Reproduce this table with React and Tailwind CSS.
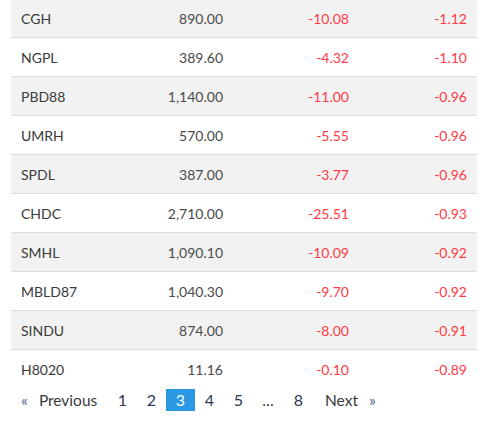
const rows = [
  ['CGH', '890.00', '-10.08', '-1.12'],
  ['NGPL', '389.60', '-4.32', '-1.10'],
  ['PBD88', '1,140.00', '-11.00', '-0.96'],
  ['UMRH', '570.00', '-5.55', '-0.96'],
  ['SPDL', '387.00', '-3.77', '-0.96'],
  ['CHDC', '2,710.00', '-25.51', '-0.93'],
  ['SMHL', '1,090.10', '-10.09', '-0.92'],
  ['MBLD87', '1,040.30', '-9.70', '-0.92'],
  ['SINDU', '874.00', '-8.00', '-0.91'],
  ['H8020', '11.16', '-0.10', '-0.89'],
]

const pages = ['1', '2', '3', '4', '5']

export default function App() {
  return (
    <div className="w-[487px] h-[440px] bg-white overflow-hidden font-['Lato',sans-serif] text-[#3a3a3a]">
      <div className="mx-[11px] w-[466px] -mt-px">
        {rows.map((r, i) => (
          <div
            key={r[0]}
            className={`flex items-center h-[39px] text-[14px] ${i % 2 === 0 ? 'bg-[#f2f2f2]' : 'bg-white'} ${i < rows.length - 1 ? 'border-b border-[#dddddd]' : ''}`}
          >
            <div className="w-[100px] pl-[10px]">{r[0]}</div>
            <div className="w-[122px] pr-[10px] text-right text-[#4a4a4a]">{r[1]}</div>
            <div className="w-[126px] pr-[10px] text-right text-[#ff3a45]">{r[2]}</div>
            <div className="w-[118px] pr-[10px] text-right text-[#ff3a45]">{r[3]}</div>
          </div>
        ))}
      </div>

      {/* Paginacao */}
      <div className="flex items-center ml-[11px] h-[22px] text-[16px] leading-[22px]">
        <div className="w-[97px] pl-[10px] flex items-center">
          <span className="text-[#4a6591]">«</span>
          <span className="ml-[11px] text-[15.5px]">Previous</span>
        </div>
        {pages.map(p => (
          <span
            key={p}
            className={`w-[29px] text-center ${p === '3' ? 'bg-[#2a98e2] text-white' : 'text-[#2d3550]'}`}
          >
            {p}
          </span>
        ))}
        <span className="w-[30px] text-center">...</span>
        <span className="w-[31px] text-center text-[#2d3550]">8</span>
        <span className="ml-[11px] text-[15.5px]">Next</span>
        <span className="ml-[11px] text-[#4a6591]">»</span>
      </div>
    </div>
  )
}
